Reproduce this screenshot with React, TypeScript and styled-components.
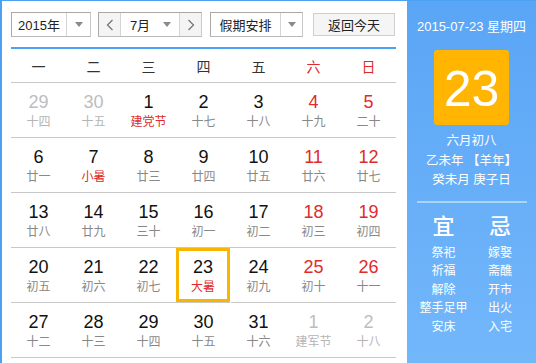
import React from "react";
import styled, { createGlobalStyle } from "styled-components";

const Global = createGlobalStyle`
  html, body { margin: 0; padding: 0; background: #fff; overflow: hidden; }
  body { font-family: "Liberation Sans", "Noto Sans CJK SC", sans-serif; }
  * { box-sizing: border-box; }
`;

const Widget = styled.div`
  display: flex;
  width: 536px;
  height: 380px;
  border-left: 2px solid #4da1f5;
  border-top: 1px solid #4da1f5;
`;

const Main = styled.div`
  width: 405px;
  padding: 11px 11px 0 9px;
  display: flex;
  flex-direction: column;
`;

const Toolbar = styled.div`
  display: flex;
  align-items: center;
  height: 25px;
  font-size: 13px;
  color: #222;
`;

const Select = styled.div<{ $w: number; $gap?: number }>`
  display: flex;
  width: ${(p) => p.$w}px;
  height: 25px;
  margin-left: ${(p) => p.$gap ?? 0}px;
  border: 1px solid #a9a9a9;
  border-right-color: #c9c9c9;
  border-bottom-color: #b9b9b9;
  background: #fff;
`;

const SelectText = styled.div`
  flex: 1;
  display: flex;
  align-items: center;
  justify-content: center;
  border-right: 1px solid #d4d4d4;
`;

const ArrowBox = styled.div<{ $w: number }>`
  width: ${(p) => p.$w}px;
  display: flex;
  align-items: center;
  justify-content: center;
  &::after {
    content: "";
    border-left: 4px solid transparent;
    border-right: 4px solid transparent;
    border-top: 5px solid #8a8a8a;
  }
`;

const Group = styled.div`
  display: flex;
  height: 25px;
  margin-left: 7px;
  border: 1px solid #a9a9a9;
  border-right-color: #c9c9c9;
  border-bottom-color: #b9b9b9;
`;

const NavBtn = styled.div<{ $side: "l" | "r" }>`
  width: 22px;
  display: flex;
  align-items: center;
  justify-content: center;
  background: #f4f4f4;
  color: #777;
  ${(p) => (p.$side === "l" ? "border-right: 1px solid #d4d4d4;" : "border-left: 1px solid #d4d4d4;")}
`;

const MonthText = styled.div`
  width: 34px;
  display: flex;
  align-items: center;
  justify-content: center;
  padding-left: 4px;
`;

const TodayBtn = styled.div`
  width: 82px;
  height: 23px;
  margin-left: 10px;
  display: flex;
  align-items: center;
  justify-content: center;
  border: 1px solid #cfcfcf;
  background: #f5f5f5;
  color: #222;
`;

const BlueLine = styled.div`
  height: 2px;
  background: #4ba3f7;
  margin-top: 10px;
`;

const Grid = styled.div`
  display: grid;
  grid-template-columns: repeat(7, 55px);
`;

const Head = styled.div<{ $red?: boolean }>`
  height: 34px;
  display: flex;
  align-items: center;
  justify-content: center;
  font-size: 14px;
  color: ${(p) => (p.$red ? "#e02b2b" : "#333")};
  border-bottom: 1px solid #c8c8c8;
`;

const Cell = styled.div<{ $today?: boolean }>`
  height: 55px;
  border-bottom: 1px solid #c8c8c8;
  display: flex;
  flex-direction: column;
  align-items: center;
  padding-top: 9px;
  box-shadow: ${(p) => (p.$today ? "inset 0 0 0 3px #f8b600" : "none")};
  margin-right: ${(p) => (p.$today ? "1px" : "0")};
`;

const Num = styled.div<{ $c: string }>`
  font-size: 18px;
  line-height: 20px;
  color: ${(p) => p.$c};
`;

const Lunar = styled.div<{ $c: string }>`
  margin-top: 1px;
  font-size: 12px;
  line-height: 18px;
  color: ${(p) => p.$c};
`;

const Side = styled.div`
  width: 129px;
  background: linear-gradient(#5aa5f6, #74b8fb);
  color: #fff;
  display: flex;
  flex-direction: column;
  align-items: center;
  padding-top: 18px;
`;

const DateLine = styled.div`
  font-size: 13px;
  line-height: 16px;
`;

const DayBox = styled.div`
  width: 75px;
  height: 75px;
  margin-top: 15px;
  background: #ffb502;
  border-radius: 3px;
  display: flex;
  align-items: center;
  justify-content: center;
  font-size: 50px;
  padding-top: 2px;
`;

const Info = styled.div`
  margin-top: 7px;
  font-size: 12.5px;
  line-height: 19.5px;
  text-align: center;
`;

const Sep = styled.div`
  width: 110px;
  height: 2px;
  margin-top: 10px;
  background: rgba(255, 255, 255, 0.45);
`;

const Cols = styled.div`
  display: grid;
  grid-template-columns: 57px 56px;
  margin-top: 12px;
  justify-items: center;
`;

const Big = styled.div`
  font-size: 22px;
  font-weight: 500;
  line-height: 24px;
  margin-bottom: 5px;
`;

const Item = styled.div`
  font-size: 12px;
  line-height: 18.6px;
`;

type Day = { n: number; l: string; kind?: "other"; red?: boolean; lred?: boolean; today?: boolean };

const weeks: Day[][] = [
  [
    { n: 29, l: "十四", kind: "other" },
    { n: 30, l: "十五", kind: "other" },
    { n: 1, l: "建党节", lred: true },
    { n: 2, l: "十七" },
    { n: 3, l: "十八" },
    { n: 4, l: "十九", red: true },
    { n: 5, l: "二十", red: true },
  ],
  [
    { n: 6, l: "廿一" },
    { n: 7, l: "小暑", lred: true },
    { n: 8, l: "廿三" },
    { n: 9, l: "廿四" },
    { n: 10, l: "廿五" },
    { n: 11, l: "廿六", red: true },
    { n: 12, l: "廿七", red: true },
  ],
  [
    { n: 13, l: "廿八" },
    { n: 14, l: "廿九" },
    { n: 15, l: "三十" },
    { n: 16, l: "初一" },
    { n: 17, l: "初二" },
    { n: 18, l: "初三", red: true },
    { n: 19, l: "初四", red: true },
  ],
  [
    { n: 20, l: "初五" },
    { n: 21, l: "初六" },
    { n: 22, l: "初七" },
    { n: 23, l: "大暑", lred: true, today: true },
    { n: 24, l: "初九" },
    { n: 25, l: "初十", red: true },
    { n: 26, l: "十一", red: true },
  ],
  [
    { n: 27, l: "十二" },
    { n: 28, l: "十三" },
    { n: 29, l: "十四" },
    { n: 30, l: "十五" },
    { n: 31, l: "十六" },
    { n: 1, l: "建军节", kind: "other" },
    { n: 2, l: "十八", kind: "other" },
  ],
];

const heads = ["一", "二", "三", "四", "五", "六", "日"];
const yi = ["祭祀", "祈福", "解除", "整手足甲", "安床"];
const ji = ["嫁娶", "斋醮", "开市", "出火", "入宅"];

export default function App() {
  return (
    <>
      <Global />
      <Widget>
        <Main>
          <Toolbar>
            <Select $w={80}>
              <SelectText>2015年</SelectText>
              <ArrowBox $w={23} />
            </Select>
            <Group>
              <NavBtn $side="l">
                <svg width="8" height="12" viewBox="0 0 8 12">
                  <path d="M6.5 1 L1.5 6 L6.5 11" fill="none" stroke="#777" strokeWidth="1.3" />
                </svg>
              </NavBtn>
              <MonthText>7月</MonthText>
              <ArrowBox $w={24} />
              <NavBtn $side="r">
                <svg width="8" height="12" viewBox="0 0 8 12">
                  <path d="M1.5 1 L6.5 6 L1.5 11" fill="none" stroke="#777" strokeWidth="1.3" />
                </svg>
              </NavBtn>
            </Group>
            <Select $w={93} $gap={8}>
              <SelectText>假期安排</SelectText>
              <ArrowBox $w={21} />
            </Select>
            <TodayBtn>返回今天</TodayBtn>
          </Toolbar>
          <BlueLine />
          <Grid>
            {heads.map((h, i) => (
              <Head key={h} $red={i >= 5}>
                {h}
              </Head>
            ))}
            {weeks.flat().map((d, i) => {
              const other = d.kind === "other";
              const nc = other ? "#bdbdbd" : d.red ? "#e02b2b" : "#111";
              const lc = other ? "#b5b5b5" : d.lred ? "#e02b2b" : "#888";
              return (
                <Cell key={i} $today={d.today}>
                  <Num $c={nc}>{d.n}</Num>
                  <Lunar $c={lc}>{d.l}</Lunar>
                </Cell>
              );
            })}
          </Grid>
        </Main>
        <Side>
          <DateLine>2015-07-23 星期四</DateLine>
          <DayBox>23</DayBox>
          <Info>
            六月初八
            <br />
            乙未年 【羊年】
            <br />
            癸未月 庚子日
          </Info>
          <Sep />
          <Cols>
            <Big>宜</Big>
            <Big>忌</Big>
            {yi.map((y, i) => (
              <React.Fragment key={y}>
                <Item>{y}</Item>
                <Item>{ji[i]}</Item>
              </React.Fragment>
            ))}
          </Cols>
        </Side>
      </Widget>
    </>
  );
}
